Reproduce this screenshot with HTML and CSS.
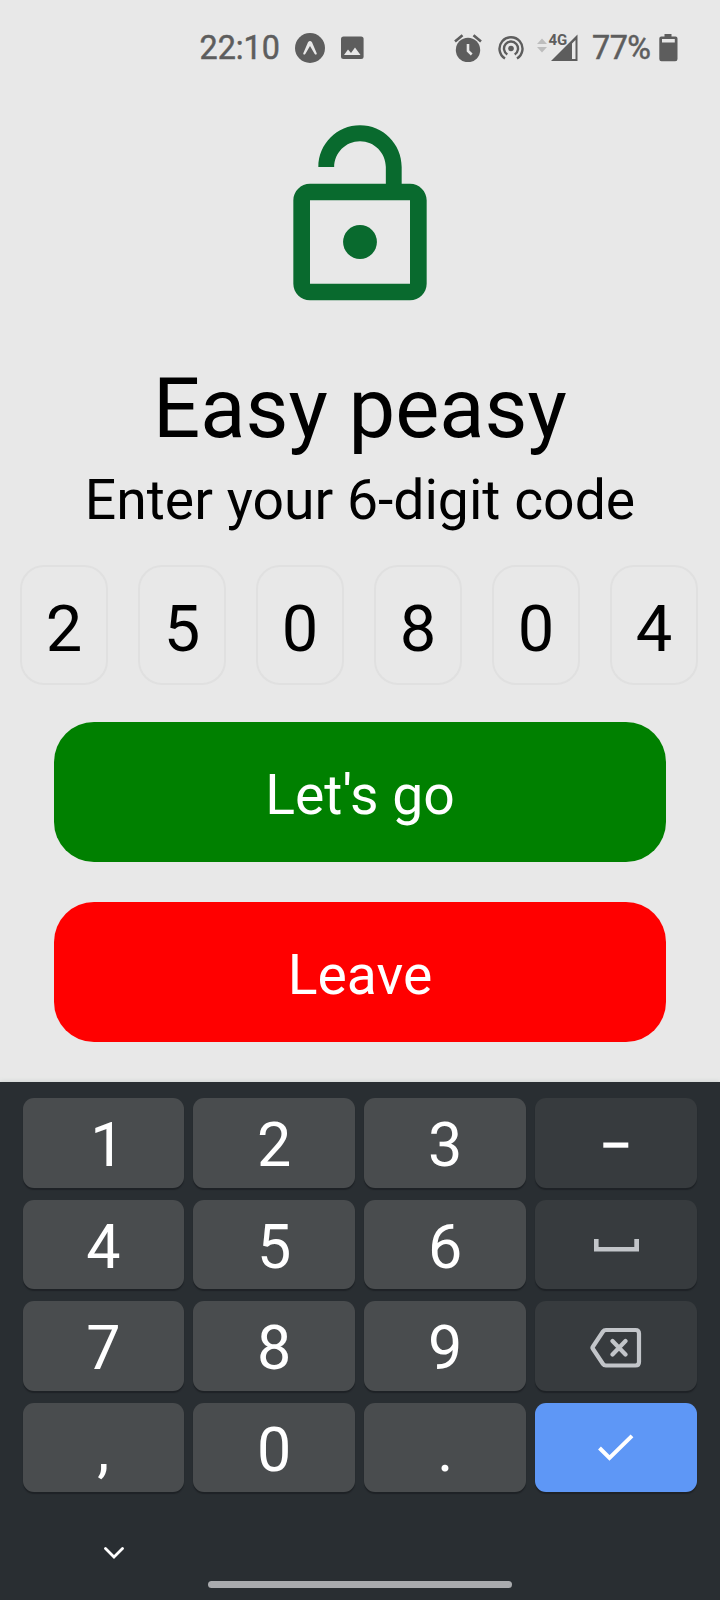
FILE: index.html
```html
<!DOCTYPE html>
<html lang="en">
<head>
<meta charset="utf-8">
<title>Enter code</title>
<link rel="stylesheet" href="styles.css">
</head>
<body>
<main class="screen">
  <header class="status">
    <div class="status-left">
      <span class="status-text">22:10</span>
      <svg class="ic-app" width="30" height="30" viewBox="0 0 30 30"><circle cx="15" cy="15" r="15"/><path class="cut" d="M8.200 20.500 13 9.300Q15 6.800 17 9.300L21.800 20.500Q21.500 22.500 19.700 21L15 13 10.300 21Q8.500 22.500 8.200 20.500z"/></svg>
      <svg class="ic-image" width="23" height="24" viewBox="0 0 23 24"><rect y=".5" width="22.600" height="22.600" rx="2.500"/><path class="cut" d="M3 19 7 13.500 10 17 14 11.500 19.500 19z"/></svg>
    </div>
    <div class="status-right">
      <svg width="28" height="28" viewBox="0 0 28 28"><circle cx="14" cy="16" r="12.200"/><path class="line" d="M1 7.500 8.500 1.200M27 7.500 19.500 1.200" stroke-width="2.600"/><path class="cutline" d="M14 10v7l3.700 3.500" stroke-width="2.600"/></svg>
      <svg class="ic-hotspot" width="26" height="26" viewBox="0 0 26 26"><circle cx="13" cy="13.500" r="2.800"/><path class="line" d="M9.300 19.500A7 7 0 1 1 16.700 19.500M7 23.500A11.500 11.500 0 1 1 19 23.500" stroke-width="2.400"/></svg>
      <svg class="ic-signal" width="42" height="30" viewBox="0 0 42 30"><path class="faint" d="M0 8.500 5 3 10 8.500zM0 11.500 5 17 10 11.500z" transform="translate(0 3.500)"/><path fill-rule="evenodd" d="M14 29 40.500 2.500V29zM35 11.500V27H38.500V8z"/><text class="net" x="11.500" y="12.800">4G</text></svg>
      <span class="status-text percent">77%</span>
      <svg class="ic-battery" width="19" height="28" viewBox="0 0 19 28"><path fill-rule="evenodd" d="M5.500 0h7v2.500H16.500Q18.500 2.500 18.500 4.500V25Q18.500 27.300 16.200 27.300H2.500Q.3 27.300.3 25V4.500Q.3 2.500 2.300 2.500H5.500zM3 5V8.500H15.800V5z"/></svg>
    </div>
  </header>

  <section class="content">
    <svg class="lock" viewBox="0 0 24 24"><path d="M18 8h-1V6c0-2.760-2.240-5-5-5S7 3.240 7 6h1.900c0-1.710 1.390-3.100 3.100-3.100s3.100 1.390 3.100 3.100v2H6c-1.100 0-2 .9-2 2v10c0 1.100.9 2 2 2h12c1.100 0 2-.9 2-2V10c0-1.100-.9-2-2-2zm0 12H6V10h12z"/><circle cx="12" cy="15" r="2.030"/></svg>
    <h1 class="title">Easy peasy</h1>
    <p class="subtitle">Enter your 6-digit code</p>
    <div class="code">
      <span class="digit">2</span><span class="digit">5</span><span class="digit">0</span><span class="digit">8</span><span class="digit">0</span><span class="digit">4</span>
    </div>
    <div class="actions">
      <button class="btn go">Let's go</button>
      <button class="btn leave">Leave</button>
    </div>
  </section>

  <section class="keyboard">
    <div class="keys">
      <span class="key one">1</span><span class="key">2</span><span class="key">3</span>
      <span class="key side dash"><svg width="26" height="6" viewBox="0 0 26 6"><path class="white" d="M.3.5H25.300V5.700H.3z"/></svg></span>
      <span class="key">4</span><span class="key">5</span><span class="key">6</span>
      <span class="key side space"><svg width="45" height="13" viewBox="0 0 45 13"><path class="gray" d="M0 0H4.600V8H40.300V0H45V12.400H0z"/></svg></span>
      <span class="key">7</span><span class="key">8</span><span class="key">9</span>
      <span class="key side back"><svg width="52" height="42" viewBox="0 0 52 42"><path class="grayline" d="M16 3H45.500Q49 3 49 6.500V35Q49 38.500 45.500 38.500H16Q14 38.500 13 37L2.700 21.500Q2.200 20.700 2.700 20L13 4.500Q14 3 16 3zM22.500 14 35.500 27.500M35.500 14 22.500 27.500" stroke-width="4.200"/></svg></span>
      <span class="key">,</span><span class="key">0</span><span class="key">.</span>
      <span class="key enter"><svg width="36" height="28" viewBox="0 0 36 28"><path class="whiteline" d="M1.500 14 11.500 24 34 1.800" stroke-width="4"/></svg></span>
    </div>
    <svg class="hide" width="20" height="12" viewBox="0 0 20 12"><path class="whiteline" stroke-linecap="round" d="M1.500 1.500 10 10 18.500 1.500" stroke-width="2.800"/></svg>
    <div class="home"></div>
  </section>
</main>
</body>
</html>
```
FILE: styles.css
```css
* { box-sizing: border-box; }
body { margin: 0; font-family: Roboto, "Liberation Sans", sans-serif; }
svg { display: block; flex: none; }
.screen {
  width: 720px; height: 1600px; overflow: hidden;
  display: flex; flex-direction: column;
  background: #e8e8e8; color: #000;
}
.status {
  height: 96px; padding: 0 42px 0 199.500px;
  display: flex; justify-content: space-between; align-items: center;
  fill: #5d5d5d; color: #5d5d5d;
}
.status-left, .status-right { display: flex; align-items: center; }
.status-text { font-size: 32.300px; line-height: 40px; -webkit-text-stroke: .5px #5d5d5d; }
.ic-app { margin-left: 15px; }
.ic-image { margin-left: 16px; }
.ic-hotspot { margin-left: 16px; }
.ic-signal { margin: -3px 0 0 13px; }
.percent { margin-left: 13px; letter-spacing: -.5px; }
.ic-battery { margin-left: 8.500px; }
.cut { fill: #e8e8e8; }
.cutline { fill: none; stroke: #e8e8e8; }
.line { fill: none; stroke: #5d5d5d; }
.faint { fill: #bdbdbd; }
.net { font-size: 15px; font-weight: 700; }

.content { height: 986px; display: flex; flex-direction: column; align-items: center; padding-top: 21px; }
.lock { width: 200px; height: 200px; fill: #096a2e; }
.title { margin: 43px 0 0; font-size: 83.200px; line-height: 98px; font-weight: 400; }
.subtitle { margin: 11px 0 0; font-size: 55.300px; line-height: 64px; }
.code { margin: 32px 2px 0 0; width: 678px; display: flex; justify-content: space-between; }
.digit {
  width: 88px; height: 120px; padding-top: 7px;
  border: 2px solid #e0e0e0; border-radius: 24px;
  display: flex; align-items: center; justify-content: center; font-size: 65px;
}
.actions { margin-top: 37px; display: flex; flex-direction: column; gap: 40px; }
.btn {
  width: 612px; height: 140px; padding: 6px 0 0; border: 0; border-radius: 40px;
  font: 400 55.300px Roboto, "Liberation Sans", sans-serif; color: #fff;
}
.go { background: #008000; }
.leave { background: #f00; }

.keyboard { height: 518px; padding: 16px 23px 0 22.500px; background: #292e32; box-shadow: 0 -1px 4px #d0d6d4; }
.keys { display: grid; grid-template-columns: repeat(4, 1fr); grid-auto-rows: 89.500px; gap: 12px 9.300px; }
.key {
  display: flex; align-items: center; justify-content: center;
  padding-top: 5px; border-radius: 11px;
  background: #494c4e; color: #fff; font-size: 61px; line-height: 72px;
  box-shadow: 0 2px 1px #1e2226;
}
.one { padding-left: 8px; }
.side { background: #373b3e; padding: 0; }
.dash { padding-top: 4px; }
.space { padding-top: 3px; }
.back { padding-top: 4px; }
.enter { background: #5e97f6; padding-top: 2px; }
.white { fill: #fff; }
.gray { fill: #c2c5c9; }
.grayline { fill: none; stroke: #c2c5c9; stroke-linecap: round; }
.whiteline { fill: none; stroke: #fff; }
.hide { margin: 55px 0 0 81.500px; }
.home { width: 304px; height: 7px; margin: 22px 0 0 185.500px; border-radius: 4px; background: #a9abae; }
```
